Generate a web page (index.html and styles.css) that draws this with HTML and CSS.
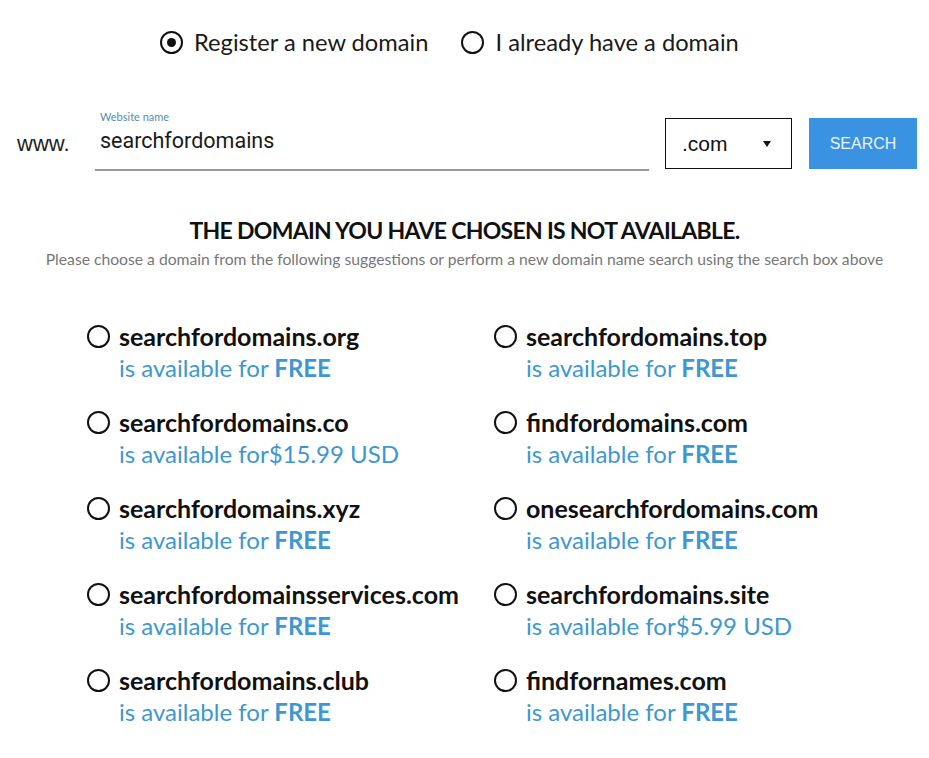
FILE: index.html
```html
<!DOCTYPE html>
<html lang="en">
<head>
    <meta charset="UTF-8">
    <meta name="viewport" content="width=device-width, initial-scale=1.0">
    <title>Search for domains</title>
    <link rel="stylesheet" href="styles.css">
</head>
<body>
    <div class="mode">
        <label class="mode-opt"><span class="radio checked"></span>Register a new domain</label>
        <label class="mode-opt"><span class="radio"></span>I already have a domain</label>
    </div>

    <div class="search">
        <span class="www">www.</span>
        <div class="field">
            <span class="field-label">Website name</span>
            <div class="field-value">searchfordomains</div>
        </div>
        <div class="tld">.com <span class="caret"></span></div>
        <button class="search-btn">SEARCH</button>
    </div>

    <h2 class="notice">THE DOMAIN YOU HAVE CHOSEN IS NOT AVAILABLE.</h2>
    <p class="hint">Please choose a domain from the following suggestions or perform a new domain name search using the search box above</p>

    <!-- Suggestions -->
    <div class="suggestions">
        <div class="sug"><span class="radio"></span><div><div class="name">searchfordomains.org</div><div class="price">is available for <b>FREE</b></div></div></div>
        <div class="sug"><span class="radio"></span><div><div class="name">searchfordomains.top</div><div class="price">is available for <b>FREE</b></div></div></div>
        <div class="sug"><span class="radio"></span><div><div class="name">searchfordomains.co</div><div class="price">is available for$15.99 USD</div></div></div>
        <div class="sug"><span class="radio"></span><div><div class="name">findfordomains.com</div><div class="price">is available for <b>FREE</b></div></div></div>
        <div class="sug"><span class="radio"></span><div><div class="name">searchfordomains.xyz</div><div class="price">is available for <b>FREE</b></div></div></div>
        <div class="sug"><span class="radio"></span><div><div class="name">onesearchfordomains.com</div><div class="price">is available for <b>FREE</b></div></div></div>
        <div class="sug"><span class="radio"></span><div><div class="name">searchfordomainsservices.com</div><div class="price">is available for <b>FREE</b></div></div></div>
        <div class="sug"><span class="radio"></span><div><div class="name">searchfordomains.site</div><div class="price">is available for$5.99 USD</div></div></div>
        <div class="sug"><span class="radio"></span><div><div class="name">searchfordomains.club</div><div class="price">is available for <b>FREE</b></div></div></div>
        <div class="sug"><span class="radio"></span><div><div class="name">findfornames.com</div><div class="price">is available for <b>FREE</b></div></div></div>
    </div>
</body>
</html>
```
FILE: styles.css
```css
* {
    margin: 0;
    padding: 0;
    box-sizing: border-box;
}
body {
    font-family: Lato, "Open Sans", sans-serif;
    background: #fff;
    color: #111;
    width: 929px;
}
.radio {
    display: inline-block;
    flex: none;
    width: 23px;
    height: 23px;
    border: 2px solid #111;
    border-radius: 50%;
    position: relative;
}
.radio.checked::after {
    content: "";
    position: absolute;
    left: 5px;
    top: 5px;
    width: 9px;
    height: 9px;
    border-radius: 50%;
    background: #111;
}
/* Register / transfer switch */
.mode {
    display: flex;
    gap: 33px;
    padding-top: 27px;
    padding-left: 160px;
    height: 56px;
}
.mode-opt {
    display: flex;
    align-items: center;
    gap: 11px;
    font-size: 23.7px;
    line-height: 30px;
    color: #1a1a1a;
    height: 30px;
}
/* Search row */
.search {
    display: flex;
    align-items: flex-end;
    margin-top: 62px;
    padding-left: 17px;
    height: 51px;
}
.www {
    font-family: "Liberation Sans", Arial, sans-serif;
    font-size: 22px;
    color: #222;
    width: 78px;
    padding-bottom: 12px;
}
.field {
    width: 554px;
    height: 65px;
    margin-bottom: -2px;
    border-bottom: 2px solid #999;
    padding-left: 5px;
    padding-top: 4px;
    display: flex;
    flex-direction: column;
}
.field-label {
    font-size: 11px;
    color: #5b8ea3;
    line-height: 14px;
}
.field-value {
    font-family: Roboto, "Liberation Sans", sans-serif;
    font-size: 21.5px;
    color: #1a1a1a;
    margin-top: 4px;
}
.tld {
    width: 127px;
    height: 51px;
    margin-left: 16px;
    border: 1px solid #111;
    display: flex;
    align-items: center;
    justify-content: space-between;
    padding: 0 20px 0 16px;
    font-family: "Liberation Sans", Arial, sans-serif;
    font-size: 21px;
    color: #111;
}
.caret {
    width: 0;
    height: 0;
    border-left: 4px solid transparent;
    border-right: 4px solid transparent;
    border-top: 6px solid #111;
}
.search-btn {
    width: 108px;
    height: 51px;
    margin-left: 17px;
    border: none;
    background: #3a93e2;
    color: #e8f4ff;
    font-family: "Liberation Sans", Arial, sans-serif;
    font-size: 16px;
}
/* Notice */
.notice {
    text-align: center;
    font-size: 23px;
    font-weight: 700;
    letter-spacing: -0.7px;
    margin-top: 46px;
    line-height: 30px;
    color: #111;
}
.hint {
    text-align: center;
    font-size: 15.7px;
    color: #777;
    margin-top: 4px;
    line-height: 20px;
}
/* Suggestions grid */
.suggestions {
    display: grid;
    grid-template-columns: 407px 1fr;
    row-gap: 22px;
    padding-left: 87px;
    margin-top: 51px;
}
.sug {
    display: flex;
    gap: 9px;
    height: 64px;
}
.sug .radio {
    margin-top: 5px;
}
.name {
    font-size: 25px;
    font-weight: 700;
    line-height: 32px;
    color: #111;
}
.price {
    font-size: 24px;
    line-height: 32px;
    color: #3e97cf;
}
.price b {
    font-weight: 700;
}
```
